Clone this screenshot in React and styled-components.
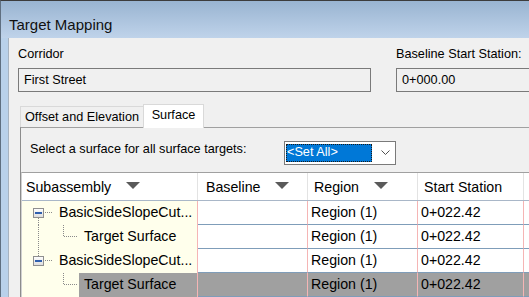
import React from 'react';
import styled, { createGlobalStyle } from 'styled-components';

const Global = createGlobalStyle`
  html, body { margin: 0; padding: 0; background: #f0f0f0; }
  body { font-family: "Liberation Sans", Arial, sans-serif; color: #000; }
  * { box-sizing: border-box; }
`;

const Window = styled.div`
  width: 529px;
  height: 297px;
  overflow: hidden;
  border-top: 1px solid #3c3c3c;
  border-left: 1px solid #5f6f80;
  background: #b9d1ea;
  display: flex;
  flex-direction: column;
`;

const TitleBar = styled.div`
  flex: none;
  height: 37px;
  padding: 15px 0 0 8px;
  background: linear-gradient(#99b4d1, #bfd3ea);
  font-size: 15px;
  line-height: 17px;
  color: #111;
  white-space: nowrap;
`;

const Client = styled.div`
  flex: 1;
  min-height: 0;
  margin-left: 7px;
  border-left: 1px solid #a7b3c0;
  background: #f0f0f0;
  padding: 9px 0 0 9px;
  display: flex;
  flex-direction: column;
`;

const FieldRow = styled.div`
  display: flex;
  gap: 25px;
  flex: none;
`;

const Field = styled.div`
  flex: none;
  width: ${(p) => p.$w}px;
  display: flex;
  flex-direction: column;
  gap: 6px;
`;

const Label = styled.div`
  font-size: 12.7px;
  line-height: 15px;
  white-space: nowrap;
`;

const TextBox = styled.div`
  height: 24px;
  border: 1px solid #7a7a7a;
  background: #f0f0f0;
  padding-left: 5px;
  display: flex;
  align-items: center;
  font-size: 12.7px;
  line-height: 15px;
  white-space: nowrap;
`;

const TabStrip = styled.div`
  flex: none;
  margin: 12px 0 0 2px;
  height: 23px;
  display: flex;
  align-items: flex-end;
  position: relative;
  z-index: 1;
`;

const Tab = styled.div`
  flex: none;
  width: ${(p) => p.$w}px;
  height: ${(p) => (p.$active ? 24 : 21)}px;
  margin-bottom: ${(p) => (p.$active ? -1 : 0)}px;
  margin-left: ${(p) => (p.$active ? -1 : 0)}px;
  border: 1px solid #d9d9d9;
  border-bottom: none;
  background: ${(p) => (p.$active ? '#ffffff' : '#f0f0f0')};
  display: flex;
  justify-content: center;
  align-items: ${(p) => (p.$active ? 'flex-start' : 'center')};
  padding-top: ${(p) => (p.$active ? 3 : 0)}px;
  font-size: 12.7px;
  line-height: 15px;
  white-space: nowrap;
`;

const Panel = styled.div`
  flex: 1;
  min-height: 0;
  margin-left: 2px;
  border-left: 1px solid #8c8c8c;
  border-top: 1px solid #a0a0a0;
  background: #f0f0f0;
  display: flex;
  flex-direction: column;
`;

const SelectRow = styled.div`
  flex: none;
  display: flex;
  align-items: flex-start;
  padding: 13px 0 0 9px;
`;

const SelectLabel = styled(Label)`
  width: 254px;
  margin-top: 1px;
`;

const Combo = styled.div`
  flex: none;
  width: 112px;
  height: 24px;
  border: 1px solid #7a7a7a;
  background: #fff;
  display: flex;
  align-items: center;
  padding-left: 1px;
`;

const ComboValue = styled.div`
  width: 86px;
  height: 18px;
  background: #0078d7;
  color: #fff;
  outline: 1px dotted #1a1a1a;
  outline-offset: -1px;
  padding-left: 1px;
  font-size: 12.7px;
  line-height: 17px;
  white-space: nowrap;
`;

const Chevron = styled.svg`
  margin-left: 9px;
  flex: none;
`;

const Grid = styled.div`
  margin-top: 7px;
  width: 560px;
  border-top: 1px solid #a0a0a0;
  border-left: 1px solid #d0d0d0;
  display: flex;
  flex-direction: column;
`;

const cols = '176px 110px 110px 106px 1fr';

const HeaderRow = styled.div`
  display: grid;
  grid-template-columns: ${cols};
  height: 28px;
  background: #fff;
  border-bottom: 1px solid #a9b7c8;
`;

const HeaderCell = styled.div`
  display: flex;
  align-items: center;
  padding-left: ${(p) => p.$pad}px;
  border-right: 1px solid #e3e3e3;
  font-size: 14.2px;
  line-height: 16px;
  white-space: nowrap;
`;

const SortArrow = styled.span`
  margin-left: 15px;
  margin-top: -2px;
  width: 0;
  height: 0;
  border-left: 7px solid transparent;
  border-right: 7px solid transparent;
  border-top: 7px solid #5a5a5a;
`;

const DataRow = styled.div`
  display: grid;
  grid-template-columns: ${cols};
  height: 24px;
`;

const TreeCell = styled.div`
  display: flex;
  background: #ffffec;
  border-right: 1px solid #f5b5b5;
`;

const TreeLabel = styled.div`
  flex: 1;
  min-width: 0;
  display: flex;
  align-items: center;
  padding: 0 0 2px 5px;
  background: ${(p) => (p.$selected ? '#a0a0a0' : 'transparent')};
  font-size: 14.2px;
  line-height: 16px;
  white-space: nowrap;
  overflow: hidden;
`;

const Cell = styled.div`
  display: flex;
  align-items: center;
  padding: 0 0 1px 3px;
  background: ${(p) => (p.$selected ? '#a0a0a0' : '#ffffff')};
  border-right: 1px solid #f5b5b5;
  border-bottom: 1px solid #7f9db9;
  font-size: 14.2px;
  line-height: 16px;
  white-space: nowrap;
`;

const TreeSvg = styled.svg`
  flex: none;
  display: block;
`;

const dotted = {
  stroke: '#8a8a8a',
  strokeWidth: 1,
  strokeDasharray: '1 1',
  shapeRendering: 'crispEdges',
};

function ExpandBox({ id }) {
  return (
    <g>
      <defs>
        <linearGradient id={id} x1="0" y1="0" x2="0" y2="1">
          <stop offset="0" stopColor="#ffffff" />
          <stop offset="1" stopColor="#dcdcdc" />
        </linearGradient>
      </defs>
      <rect x="11.5" y="7.5" width="10" height="9" fill={`url(#${id})`} stroke="#8f8f8f" shapeRendering="crispEdges" />
      <rect x="13" y="11" width="7" height="2" fill="#2f5fae" />
    </g>
  );
}

function TreeGlyph({ kind, id }) {
  if (kind === 'parent' || kind === 'parentLast') {
    return (
      <TreeSvg width="32" height="24" viewBox="0 0 32 24">
        {kind === 'parent' && <line x1="16.5" y1="17" x2="16.5" y2="24" style={dotted} />}
        {kind === 'parentLast' && <line x1="16.5" y1="0" x2="16.5" y2="7" style={dotted} />}
        <line x1="23" y1="11.5" x2="30" y2="11.5" style={dotted} />
        <ExpandBox id={id} />
      </TreeSvg>
    );
  }
  return (
    <TreeSvg width="57" height="24" viewBox="0 0 57 24">
      {kind === 'child' && <line x1="16.5" y1="0" x2="16.5" y2="24" style={dotted} />}
      <line x1="41.5" y1="0" x2="41.5" y2="11" style={dotted} />
      <line x1="42" y1="11.5" x2="55" y2="11.5" style={dotted} />
    </TreeSvg>
  );
}

const rows = [
  { kind: 'parent', name: 'BasicSideSlopeCut...' },
  { kind: 'child', name: 'Target Surface' },
  { kind: 'parentLast', name: 'BasicSideSlopeCut...' },
  { kind: 'childLast', name: 'Target Surface', selected: true },
];

const headers = [
  { label: 'Subassembly', pad: 4, arrow: true },
  { label: 'Baseline', pad: 8, arrow: true },
  { label: 'Region', pad: 6, arrow: true },
  { label: 'Start Station', pad: 6 },
  { label: '', pad: 0 },
];

export default function App() {
  return (
    <>
      <Global />
      <Window>
        <TitleBar>Target Mapping</TitleBar>
        <Client>
          <FieldRow>
            <Field $w={353}>
              <Label>Corridor</Label>
              <TextBox>First Street</TextBox>
            </Field>
            <Field $w={200}>
              <Label>Baseline Start Station:</Label>
              <TextBox>0+000.00</TextBox>
            </Field>
          </FieldRow>
          <TabStrip>
            <Tab $w={124}>Offset and Elevation</Tab>
            <Tab $w={61} $active>Surface</Tab>
          </TabStrip>
          <Panel>
            <SelectRow>
              <SelectLabel>Select a surface for all surface targets:</SelectLabel>
              <Combo>
                <ComboValue>&lt;Set All&gt;</ComboValue>
                <Chevron width="9" height="6" viewBox="0 0 9 6">
                  <polyline points="0.5,0.5 4.5,4.5 8.5,0.5" fill="none" stroke="#505050" strokeWidth="1" />
                </Chevron>
              </Combo>
            </SelectRow>
            <Grid>
              <HeaderRow>
                {headers.map((h, i) => (
                  <HeaderCell key={i} $pad={h.pad}>
                    {h.label}
                    {h.arrow && <SortArrow />}
                  </HeaderCell>
                ))}
              </HeaderRow>
              {rows.map((r, i) => (
                <DataRow key={i}>
                  <TreeCell>
                    <TreeGlyph kind={r.kind} id={`eg${i}`} />
                    <TreeLabel $selected={r.selected}>{r.name}</TreeLabel>
                  </TreeCell>
                  <Cell $selected={r.selected} />
                  <Cell $selected={r.selected}>Region (1)</Cell>
                  <Cell $selected={r.selected}>0+022.42</Cell>
                  <Cell $selected={r.selected} />
                </DataRow>
              ))}
            </Grid>
          </Panel>
        </Client>
      </Window>
    </>
  );
}
